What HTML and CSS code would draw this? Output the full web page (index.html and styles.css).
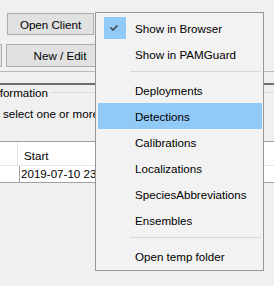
FILE: index.html
```html
<!DOCTYPE html>
<html lang="en">
<head>
    <meta charset="UTF-8">
    <meta name="viewport" content="width=device-width, initial-scale=1.0">
    <title>Tethys</title>
    <link rel="stylesheet" href="styles.css">
</head>
<body>

    <div class="window">
        <div class="top-panel">
            <div class="btn-row">
                <button class="btn btn-open">Open Client</button>
            </div>
            <div class="btn-row row-two">
                <button class="btn btn-cut"></button>
                <button class="btn btn-edit">New / Edit</button>
            </div>
        </div>

        <div class="splitter"></div>

        <div class="group">
            <div class="group-title">
                <span>Information</span>
                <span class="group-line"></span>
            </div>
            <p class="hint">select one or more</p>
        </div>

        <div class="grid">
            <div class="grid-head">
                <div class="head-cell first"></div>
                <div class="head-cell">Start</div>
            </div>
            <div class="grid-row">
                <div class="cell first"></div>
                <div class="cell">2019-07-10 23:</div>
            </div>
        </div>
    </div>

    <!-- popup menu from the Open Client drop-down -->
    <div class="popup-menu">
        <div class="menu-item">
            <span class="gutter">
                <span class="check-box">
                    <svg width="22" height="22" viewBox="0 0 22 22">
                        <polyline points="6.5,10.5 9,13 13.5,8.5" fill="none" stroke="#333" stroke-width="1.3"/>
                    </svg>
                </span>
            </span>
            <span>Show in Browser</span>
        </div>
        <div class="menu-item">
            <span class="gutter"></span>
            <span>Show in PAMGuard</span>
        </div>
        <div class="menu-sep"></div>
        <div class="menu-item">
            <span class="gutter"></span>
            <span>Deployments</span>
        </div>
        <div class="menu-item active">
            <span class="gutter"></span>
            <span>Detections</span>
        </div>
        <div class="menu-item">
            <span class="gutter"></span>
            <span>Calibrations</span>
        </div>
        <div class="menu-item">
            <span class="gutter"></span>
            <span>Localizations</span>
        </div>
        <div class="menu-item">
            <span class="gutter"></span>
            <span>SpeciesAbbreviations</span>
        </div>
        <div class="menu-item">
            <span class="gutter"></span>
            <span>Ensembles</span>
        </div>
        <div class="menu-sep"></div>
        <div class="menu-item">
            <span class="gutter"></span>
            <span>Open temp folder</span>
        </div>
    </div>

</body>
</html>
```

FILE: styles.css
```css
* {
    box-sizing: border-box;
}

body {
    margin: 0;
    width: 274px;
    height: 286px;
    overflow: hidden;
    background-color: #f0f0f0;
    font-family: "Segoe UI", "Liberation Sans", Arial, sans-serif;
    font-size: 11.6px;
    color: #000;
    position: relative;
}

.window {
    width: 274px;
}

/* buttons at the top */
.top-panel {
    height: 72px;
    padding-top: 13px;
    border-bottom: 1px solid #b9b9b9;
}

.btn-row {
    display: flex;
}

.row-two {
    margin-top: 9px;
}

.btn {
    font-family: inherit;
    font-size: 11.6px;
    color: #000;
    background-color: #e1e1e1;
    border: 1px solid #adadad;
    padding: 0;
}

.btn-open {
    margin-left: 7px;
    width: 87px;
    height: 22px;
}

.btn-cut {
    margin-left: -40px;
    width: 42px;
    height: 23px;
}

.btn-edit {
    margin-left: 4px;
    width: 108px;
    height: 23px;
}

.splitter {
    margin-top: 11px;
    height: 2px;
    background-color: #6e6e6e;
}

/* information group */
.group {
    margin-left: -10px;
}

.group-title {
    display: flex;
    align-items: center;
    height: 14px;
}

.group-line {
    flex: 1;
    margin-left: 3px;
    border-top: 1px solid #dcdcdc;
}

.hint {
    margin: 7px 0 0 13px;
    line-height: 16px;
    white-space: nowrap;
}

/* table */
.grid {
    margin-top: 19px;
    border-top: 1px solid #a0a0a0;
    border-bottom: 1px solid #a0a0a0;
    background: white;
}

.grid-head {
    display: flex;
    height: 24px;
    border-bottom: 1px solid #e5e5e5;
}

.head-cell {
    padding: 7px 0 0 6px;
    white-space: nowrap;
}

.head-cell.first {
    width: 18px;
    padding: 0;
    border-right: 1px solid #e5e5e5;
}

.grid-row {
    display: flex;
    height: 16px;
}

.cell {
    padding-left: 1px;
    line-height: 16px;
    white-space: nowrap;
}

.cell.first {
    width: 20px;
    padding: 0;
    border-right: 1px solid #a0a0a0;
}

/* popup menu */
.popup-menu {
    position: absolute;
    left: 95px;
    top: 12px;
    width: 169px;
    height: 259px;
    padding: 2px 1px 1px 2px;
    background-color: #f2f2f2;
    border: 1px solid #979797;
}

.menu-item {
    display: flex;
    align-items: center;
    height: 26px;
    padding-top: 1px;
    white-space: nowrap;
}

.menu-item.active {
    background-color: #91c9f7;
}

.gutter {
    width: 37px;
    height: 26px;
    flex-shrink: 0;
    padding: 1px 0 0 6px;
}

.check-box {
    display: block;
    width: 22px;
    height: 22px;
    background-color: #91c9f7;
}

.check-box svg {
    display: block;
}

.menu-sep {
    height: 10px;
    padding-top: 4px;
}

.menu-sep::after {
    content: "";
    display: block;
    margin: 0 1px 0 32px;
    border-top: 1px solid #d7d7d7;
}
```
